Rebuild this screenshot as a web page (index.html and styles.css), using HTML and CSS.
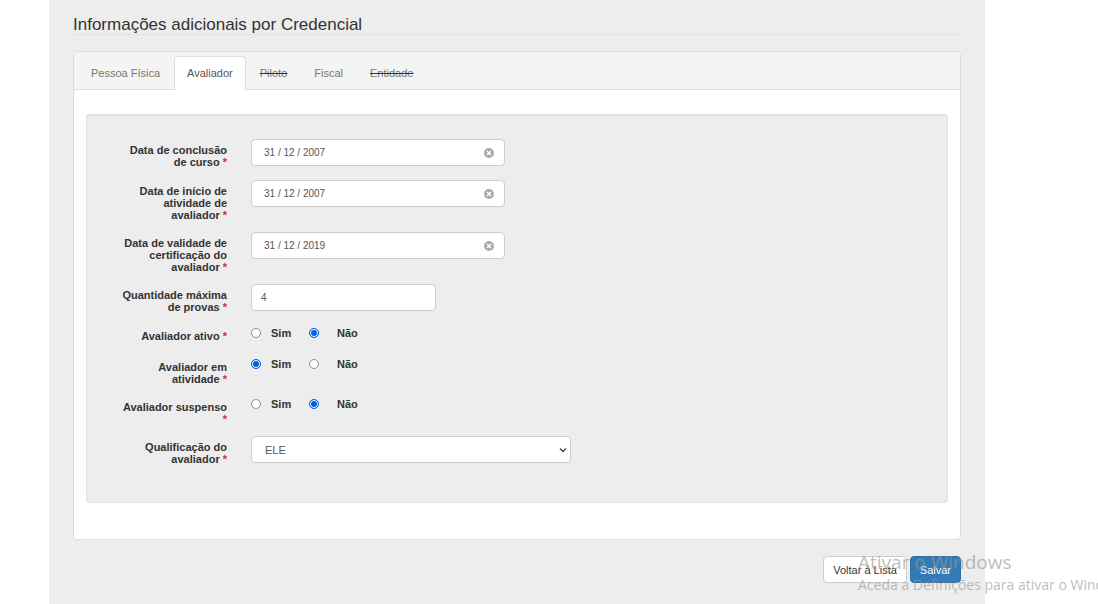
FILE: index.html
```html
<!DOCTYPE html>
<html lang="pt">
<head>
<meta charset="utf-8">
<meta name="viewport" content="width=device-width, initial-scale=1">
<title>Informações adicionais por Credencial</title>
<link rel="stylesheet" href="styles.css">
</head>
<body>
<main class="page">
  <h1 class="title">Informações adicionais por Credencial</h1>
  <form class="form">
    <section class="card">
      <nav class="tabs">
        <a class="tab" href="#pessoa">Pessoa Física</a>
        <a class="tab tab-active" href="#avaliador" aria-current="page">Avaliador</a>
        <a class="tab tab-off" href="#piloto">Piloto</a>
        <a class="tab" href="#fiscal">Fiscal</a>
        <a class="tab tab-off" href="#entidade">Entidade</a>
      </nav>
      <div class="well">
        <div class="row">
          <label class="label" for="conclusao">Data de conclusão<br>de curso <span class="req">*</span></label>
          <div class="field">
            <div class="date">
              <input class="date-input" id="conclusao" type="text" value="31 / 12 / 2007">
              <button class="clear" type="button" aria-label="Limpar"><svg class="clear-icon" viewBox="0 0 10 10"><circle cx="5" cy="5" r="5" fill="#a9a9a9"/><path d="M3 3l4 4M7 3l-4 4" stroke="#fff" stroke-width="1.4"/></svg></button>
            </div>
          </div>
        </div>
        <div class="row">
          <label class="label" for="inicio">Data de início de<br>atividade de<br>avaliador <span class="req">*</span></label>
          <div class="field">
            <div class="date">
              <input class="date-input" id="inicio" type="text" value="31 / 12 / 2007">
              <button class="clear" type="button" aria-label="Limpar"><svg class="clear-icon" viewBox="0 0 10 10"><circle cx="5" cy="5" r="5" fill="#a9a9a9"/><path d="M3 3l4 4M7 3l-4 4" stroke="#fff" stroke-width="1.4"/></svg></button>
            </div>
          </div>
        </div>
        <div class="row">
          <label class="label" for="validade">Data de validade de<br>certificação do<br>avaliador <span class="req">*</span></label>
          <div class="field">
            <div class="date">
              <input class="date-input" id="validade" type="text" value="31 / 12 / 2019">
              <button class="clear" type="button" aria-label="Limpar"><svg class="clear-icon" viewBox="0 0 10 10"><circle cx="5" cy="5" r="5" fill="#a9a9a9"/><path d="M3 3l4 4M7 3l-4 4" stroke="#fff" stroke-width="1.4"/></svg></button>
            </div>
          </div>
        </div>
        <div class="row">
          <label class="label" for="provas">Quantidade máxima<br>de provas <span class="req">*</span></label>
          <div class="field"><input class="number" id="provas" type="text" value="4"></div>
        </div>
        <div class="row" role="radiogroup" aria-labelledby="l-ativo">
          <span class="label" id="l-ativo">Avaliador ativo <span class="req">*</span></span>
          <div class="radios">
            <input class="radio" type="radio" name="ativo" id="ativo-s"><label class="option" for="ativo-s">Sim</label>
            <input class="radio" type="radio" name="ativo" id="ativo-n" checked><label class="option option-last" for="ativo-n">Não</label>
          </div>
        </div>
        <div class="row" role="radiogroup" aria-labelledby="l-atividade">
          <span class="label" id="l-atividade">Avaliador em<br>atividade <span class="req">*</span></span>
          <div class="radios">
            <input class="radio" type="radio" name="atividade" id="atividade-s" checked><label class="option" for="atividade-s">Sim</label>
            <input class="radio" type="radio" name="atividade" id="atividade-n"><label class="option option-last" for="atividade-n">Não</label>
          </div>
        </div>
        <div class="row" role="radiogroup" aria-labelledby="l-suspenso">
          <span class="label" id="l-suspenso">Avaliador suspenso<br><span class="req">*</span></span>
          <div class="radios">
            <input class="radio" type="radio" name="suspenso" id="suspenso-s"><label class="option" for="suspenso-s">Sim</label>
            <input class="radio" type="radio" name="suspenso" id="suspenso-n" checked><label class="option option-last" for="suspenso-n">Não</label>
          </div>
        </div>
        <div class="row">
          <label class="label" for="qualificacao">Qualificação do<br>avaliador <span class="req">*</span></label>
          <div class="field select-wrap">
            <select class="select" id="qualificacao"><option>ELE</option></select>
            <svg class="chevron" viewBox="0 0 8 6"><path d="M1 1.5l3 3 3-3" fill="none" stroke="#444" stroke-width="1.4"/></svg>
          </div>
        </div>
      </div>
    </section>
    <div class="actions">
      <button class="btn" type="button">Voltar à Lista</button>
      <button class="btn btn-primary" type="submit">Salvar</button>
    </div>
  </form>
</main>
<aside class="watermark">
  <p class="watermark-title">Ativar o Windows</p>
  <p class="watermark-text">Aceda a Definições para ativar o Windows.</p>
</aside>
</body>
</html>
```
FILE: styles.css
```css
* { box-sizing: border-box; }

body {
  margin: 0;
  min-height: 100vh;
  position: relative;
  overflow-x: hidden;
  background: #fff;
  color: #333;
  font: 11px/12px "Liberation Sans", Arial, sans-serif;
}

.page {
  min-height: 100vh;
  margin: 0 113px 0 49px;
  padding: 16px 24px 20px;
  background: #ededed;
}

.title {
  margin: 0 0 16px;
  border-bottom: 1px solid #e3e3e3;
  font-size: 17px;
  line-height: 18px;
  font-weight: 400;
}

.form { margin: 0; }

.card {
  border: 1px solid #ddd;
  border-radius: 4px;
  background: #fff;
  padding-bottom: 36px;
}

.tabs {
  display: flex;
  gap: 1px;
  padding: 4px 4px 0;
  border-bottom: 1px solid #ddd;
  border-radius: 4px 4px 0 0;
  background: #f4f4f4;
}

.tab {
  margin-bottom: -1px;
  padding: 10px 12px 11px;
  border: 1px solid transparent;
  border-bottom: 0;
  border-radius: 4px 4px 0 0;
  color: #777;
  text-decoration: none;
}

.tab-active {
  border-color: #ddd;
  background: #fff;
  color: #555;
}

.tab-off {
  text-decoration: line-through;
  text-decoration-color: #333;
}

.well {
  display: flex;
  flex-direction: column;
  gap: 10px;
  margin: 24px 12px 0;
  padding: 24px 24px 35px;
  border: 1px solid #e0e0e0;
  border-radius: 3px;
  background: #ededed;
  box-shadow: inset 0 1px 1px rgba(0, 0, 0, 0.05);
}

.row {
  display: grid;
  grid-template-columns: 116px 1fr;
  column-gap: 24px;
}

.label {
  padding: 5px 0 1px;
  text-align: right;
  font-weight: 700;
}

.req { color: #c9302c; }

.field { padding-bottom: 4px; }

.date,
.number,
.select {
  height: 27px;
  border: 1px solid #ccc;
  border-radius: 4px;
  background: #fff;
  color: #555;
  font: inherit;
}

.date,
.number { font-size: 10px; }

.date {
  display: flex;
  align-items: center;
  max-width: 254px;
  padding: 0 10px 0 12px;
}

.date-input {
  flex: 1;
  min-width: 0;
  padding: 0;
  border: 0;
  outline: 0;
  background: none;
  color: inherit;
  font: inherit;
}

.clear {
  display: flex;
  padding: 0;
  border: 0;
  background: none;
}

.clear-icon { width: 10px; height: 10px; }

.number {
  display: block;
  width: 185px;
  padding: 0 9px;
}

.radios {
  display: flex;
  align-items: center;
  height: 16px;
  margin-bottom: 5px;
}

.radio {
  flex: none;
  width: 10px;
  height: 10px;
  margin: 0;
  appearance: none;
  border: 1px solid #8f8f9d;
  border-radius: 50%;
  background: #fff;
}

.radio:checked {
  border-color: #0060df;
  background: #0060df;
  box-shadow: inset 0 0 0 1px #fff;
}

.option {
  width: 48px;
  padding-left: 10px;
  font-weight: 700;
}

.option-last { padding-left: 18px; }

.select-wrap {
  display: grid;
  max-width: 320px;
  align-items: center;
}

.select {
  grid-area: 1 / 1;
  width: 100%;
  padding: 0 13px;
  appearance: none;
}

.chevron {
  grid-area: 1 / 1;
  justify-self: end;
  width: 8px;
  height: 6px;
  margin-right: 4px;
  pointer-events: none;
}

.actions {
  display: flex;
  justify-content: flex-end;
  gap: 3px;
  margin-top: 16px;
}

.btn {
  height: 27px;
  padding: 0 9px;
  border: 1px solid #ccc;
  border-radius: 4px;
  background: #fff;
  color: #333;
  font: inherit;
}

.btn-primary {
  border-color: #2e6da4;
  background: #337ab7;
  color: #fff;
}

.watermark {
  position: absolute;
  left: 858px;
  right: 0;
  bottom: 9px;
  overflow: hidden;
  white-space: nowrap;
  color: rgba(150, 150, 150, 0.65);
  font-family: "Open Sans", "Noto Sans", sans-serif;
  pointer-events: none;
}

.watermark-title {
  margin: 0;
  font-size: 19px;
  line-height: 26px;
}

.watermark-text {
  margin: 0;
  font-size: 14px;
  line-height: 20px;
}
```
